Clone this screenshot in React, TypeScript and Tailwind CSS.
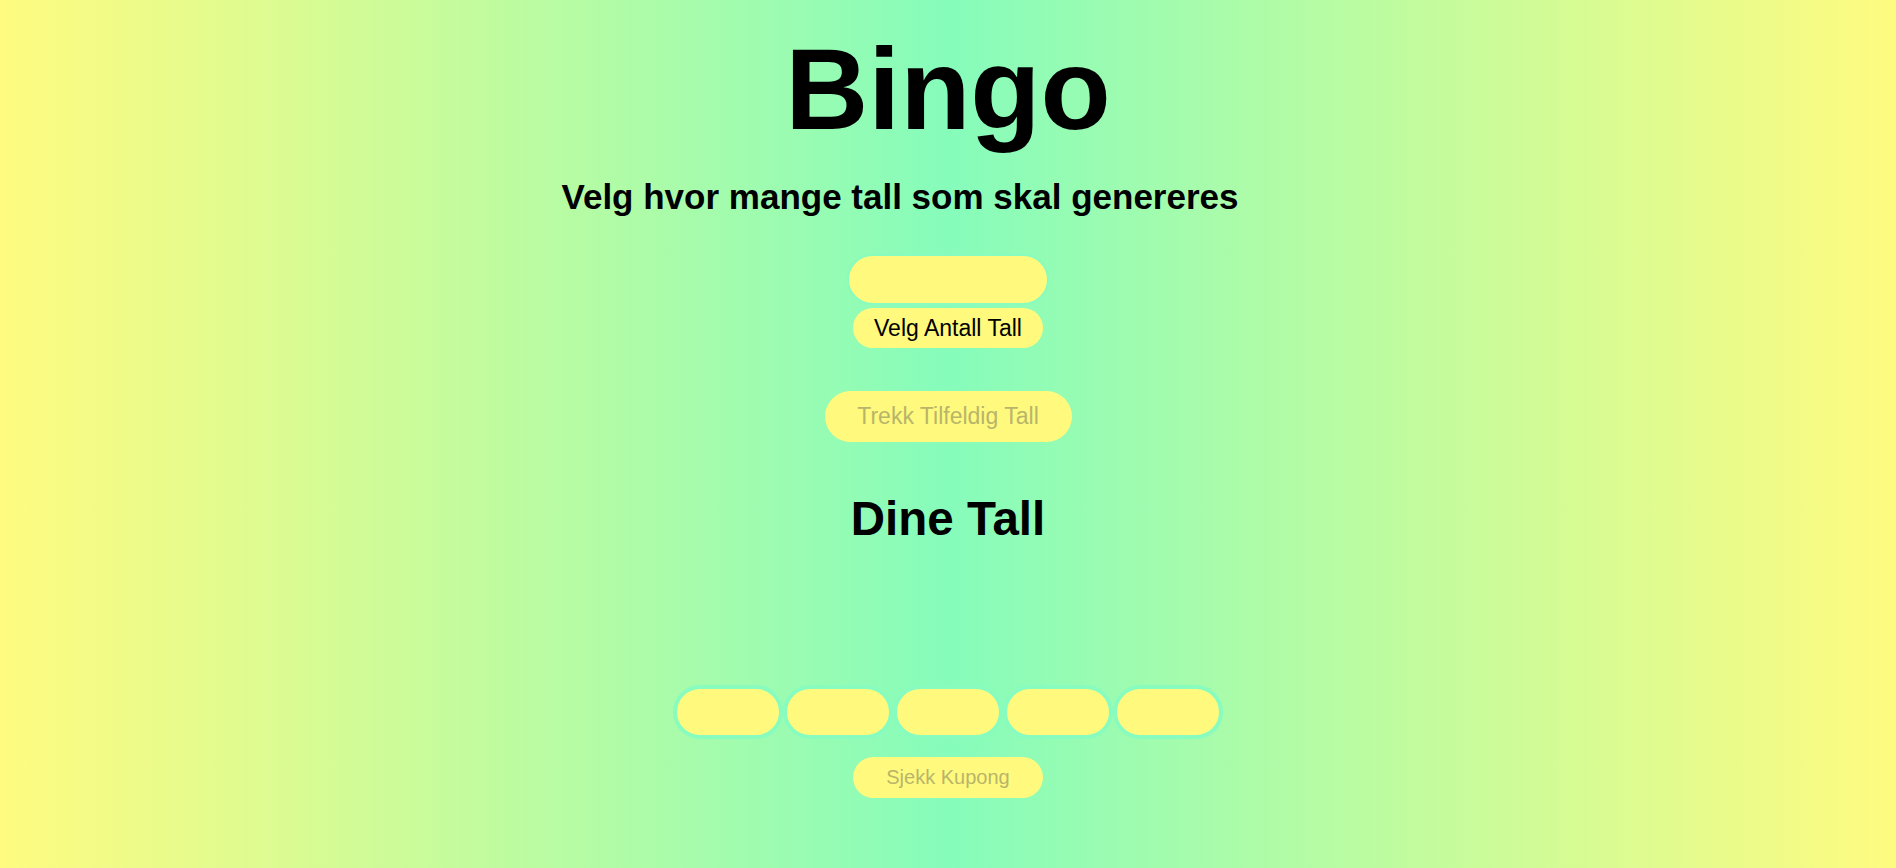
import { useState } from "react";

const pill = "rounded-full bg-[#fffa7d]";

export default function App() {
  const [count, setCount] = useState("");
  const [slots] = useState(["", "", "", "", ""]);

  return (
    <div
      className="min-h-screen w-full bg-[linear-gradient(90deg,#fffb80_0%,#86fcbb_50%,#fffb80_100%)] text-black"
      style={{ fontFamily: '"Liberation Sans", Arial, sans-serif' }}
    >
      <div className="flex flex-col items-center">
        <h1 className="mt-[32px] text-[115px] font-bold leading-none">Bingo</h1>
        <h2 className="mt-[32px] mr-24 text-[35px] font-bold leading-none">
          Velg hvor mange tall som skal genereres
        </h2>

        <input
          type="number"
          value={count}
          onChange={(e) => setCount(e.target.value)}
          className={`${pill} mt-[40px] h-[51px] w-[202px] border-2 border-[#88fcbf] px-4 text-center text-[23px] outline-none`}
        />
        <button className={`${pill} mt-[3px] h-[40px] w-[190px] text-[23px]`}>Velg Antall Tall</button>

        <button disabled className={`${pill} mt-[43px] h-[51px] w-[247px] text-[23px] text-[#b8b56b]`}>
          Trekk Tilfeldig Tall
        </button>

        <h1 className="mt-[53px] text-[47.5px] font-bold leading-none">Dine Tall</h1>

        <div className="mt-[142px] flex">
          {slots.map((v, i) => (
            <input
              key={i}
              readOnly
              value={v}
              className={`${pill} h-[54px] w-[110px] border-4 border-[#88fcbf] text-center text-[20px] outline-none`}
            />
          ))}
        </div>

        <button disabled className={`${pill} mt-[18px] h-[41px] w-[190px] text-[20px] text-[#b8b56b]`}>
          Sjekk Kupong
        </button>
      </div>
    </div>
  );
}
